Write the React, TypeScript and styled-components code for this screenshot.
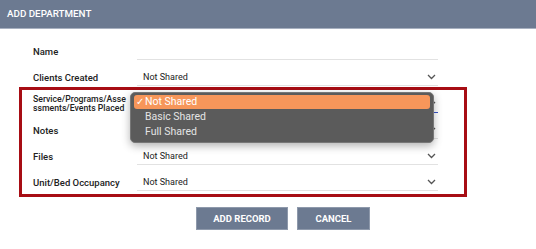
import styled, { createGlobalStyle } from 'styled-components'

const GlobalStyle = createGlobalStyle`
  html, body {
    margin: 0;
    padding: 0;
    background: #ffffff;
    font-family: Roboto, "Liberation Sans", Arial, sans-serif;
  }
`

const Chevron = () => (
  <svg width="9" height="6" viewBox="0 0 9 6">
    <path d="M1 1 L4.5 4.5 L8 1" fill="none" stroke="#555" strokeWidth="1.3" />
  </svg>
)

type FieldProps = { label: string; value?: string; focused?: boolean; tall?: boolean; children?: React.ReactNode }

const Row = ({ label, value, focused, tall, children }: FieldProps) => (
  <RowWrap $tall={tall}>
    <Label $tight={tall}>{label}</Label>
    <Field $focused={focused}>
      {value && <span>{value}</span>}
      {value !== undefined && <Chevron />}
      {children}
    </Field>
  </RowWrap>
)

export default function App() {
  return (
    <>
      <GlobalStyle />
      <Header>ADD DEPARTMENT</Header>
      <Form>
        <Row label="Name" />
        <Row label="Clients Created" value="Not Shared" />
        <Highlight>
          <Row label="Service/Programs/Assessments/Events Placed" value="" focused tall>
            <Menu>
              <MenuItem $active>
                <Check>✓</Check>Not Shared
              </MenuItem>
              <MenuItem>Basic Shared</MenuItem>
              <MenuItem>Full Shared</MenuItem>
            </Menu>
          </Row>
          <Row label="Notes" value="" />
          <Row label="Files" value="Not Shared" />
          <Row label="Unit/Bed Occupancy" value="Not Shared" />
        </Highlight>
        <Actions>
          <Button $w={92}>ADD RECORD</Button>
          <Button $w={73}>CANCEL</Button>
        </Actions>
      </Form>
    </>
  )
}

const Header = styled.div`
  height: 28px;
  background: #6c7a91;
  border-bottom: 1px solid #a7b0c0;
  color: #ffffff;
  font-size: 9.8px;
  font-weight: 500;
  line-height: 28px;
  padding-left: 7px;
`

const Form = styled.div`
  padding-top: 5px;
`

const RowWrap = styled.div<{ $tall?: boolean }>`
  display: grid;
  grid-template-columns: 104px 301px;
  align-items: end;
  height: ${p => (p.$tall ? '23px' : '26px')};
  padding-left: 33px;
`

const Label = styled.div<{ $tight?: boolean }>`
  width: ${p => (p.$tight ? '95px' : '100px')};
  font-size: ${p => (p.$tight ? '8.7px' : '9.5px')};
  font-weight: 500;
  color: #222;
  line-height: 9px;
  padding-bottom: ${p => (p.$tight ? '0' : '4px')};
  word-break: break-all;
`

const Field = styled.div<{ $focused?: boolean }>`
  position: relative;
  height: 17px;
  border-bottom: 1px solid ${p => (p.$focused ? '#3a55c8' : '#e2e2e2')};
  display: flex;
  align-items: center;
  justify-content: space-between;
  padding: 0 2px 0 6px;
  font-size: 9px;
  color: #222;

  svg {
    margin-left: auto;
  }
`

const Highlight = styled.div`
  margin: 1px 0 0 19px;
  width: 442px;
  border: 3px solid #a70d14;
  padding-bottom: 3px;

  ${RowWrap} {
    padding-left: 11px;
  }
`

const Menu = styled.div`
  position: absolute;
  left: -7px;
  top: -3px;
  width: 296px;
  padding: 2px 3px;
  background: #5b5b5b;
  border: 1px solid #777;
  border-radius: 5px;
  box-shadow: 0 3px 8px rgba(0, 0, 0, 0.3);
  z-index: 2;
`

const MenuItem = styled.div<{ $active?: boolean }>`
  height: 14px;
  line-height: 14px;
  margin-bottom: 1px;
  padding-left: 11px;
  border-radius: 3px;
  font-size: 10.5px;
  color: ${p => (p.$active ? '#ffffff' : '#e4e4e4')};
  background: ${p => (p.$active ? '#f7965a' : 'transparent')};
  position: relative;
`

const Check = styled.span`
  position: absolute;
  left: 2px;
  font-size: 10px;
`

const Actions = styled.div`
  display: flex;
  justify-content: center;
  gap: 9px;
  margin-top: 10px;
  padding-left: 30px;
`

const Button = styled.button<{ $w: number }>`
  width: ${p => p.$w}px;
  height: 23px;
  background: #6c7a91;
  border: 1px solid #8e99ab;
  color: #ffffff;
  font-family: inherit;
  font-size: 9.5px;
  font-weight: 700;
  padding: 0;
`
